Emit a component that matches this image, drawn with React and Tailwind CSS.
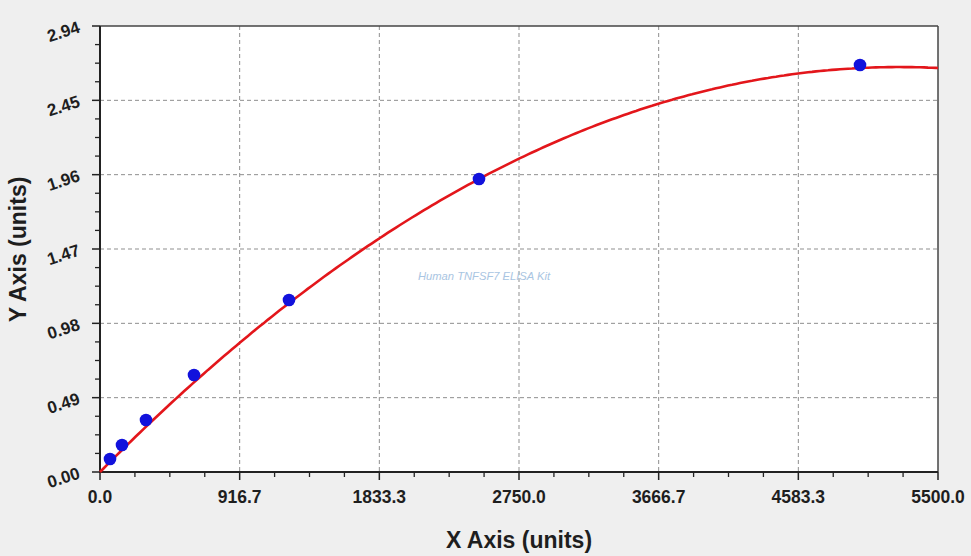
import React from "react";

// plot frame, in page pixels
const LEFT = 100;
const RIGHT = 938;
const TOP = 26;
const BOTTOM = 472;
const XSTEP = (RIGHT - LEFT) / 6;
const YSTEP = (BOTTOM - TOP) / 6;

const X_LABELS = ["0.0", "916.7", "1833.3", "2750.0", "3666.7", "4583.3", "5500.0"];
const Y_LABELS = ["0.00", "0.49", "0.98", "1.47", "1.96", "2.45", "2.94"];

const POINTS = [
  [110, 459],
  [122, 445],
  [146, 420],
  [194, 375],
  [289, 300],
  [479, 179],
  [860, 65],
];

const curveY = (t) => BOTTOM - 1.0134 * t + 0.000634 * t * t;

const curvePath = () => {
  const pts = [];
  for (let t = 0; t <= RIGHT - LEFT; t += 4) pts.push([LEFT + t, curveY(t)]);
  pts.push([RIGHT, curveY(RIGHT - LEFT)]);
  return pts.map((p, i) => `${i ? "L" : "M"}${p[0].toFixed(1)} ${p[1].toFixed(1)}`).join(" ");
};

const Chart = () => {
  const steps = [0, 1, 2, 3, 4, 5, 6];
  const minors = [1, 2, 3];

  return (
    <svg width="934" height="516" viewBox="37 0 934 516" className="block shrink-0">
      <rect x={LEFT} y={TOP} width={RIGHT - LEFT} height={BOTTOM - TOP} fill="#ffffff" />

      {/* grid */}
      {steps.slice(1, 6).map((i) => (
        <line
          key={"gx" + i}
          x1={LEFT + i * XSTEP}
          x2={LEFT + i * XSTEP}
          y1={TOP}
          y2={BOTTOM}
          stroke="#8f8f8f"
          strokeWidth="1"
          strokeDasharray="4 3"
        />
      ))}
      {steps.slice(1, 6).map((j) => (
        <line
          key={"gy" + j}
          x1={LEFT}
          x2={RIGHT}
          y1={BOTTOM - j * YSTEP}
          y2={BOTTOM - j * YSTEP}
          stroke="#8f8f8f"
          strokeWidth="1"
          strokeDasharray="4 3"
        />
      ))}

      {/* frame */}
      <line x1={LEFT} x2={RIGHT} y1={TOP} y2={TOP} stroke="#444" strokeWidth="1.5" />
      <line x1={RIGHT} x2={RIGHT} y1={TOP} y2={BOTTOM} stroke="#444" strokeWidth="1.5" />
      <line x1={LEFT} x2={LEFT} y1={TOP} y2={BOTTOM + 1} stroke="#222" strokeWidth="2" />
      <line x1={LEFT - 1} x2={RIGHT} y1={BOTTOM} y2={BOTTOM} stroke="#222" strokeWidth="2" />

      {/* ticks */}
      {steps.map((i) => (
        <g key={"tx" + i}>
          <line x1={LEFT + i * XSTEP} x2={LEFT + i * XSTEP} y1={BOTTOM} y2={BOTTOM + 8} stroke="#222" strokeWidth="1.5" />
          {i < 6 &&
            minors.map((k) => (
              <line
                key={k}
                x1={LEFT + i * XSTEP + (k * XSTEP) / 4}
                x2={LEFT + i * XSTEP + (k * XSTEP) / 4}
                y1={BOTTOM}
                y2={BOTTOM + 5}
                stroke="#222"
                strokeWidth="1.3"
              />
            ))}
        </g>
      ))}
      {steps.map((j) => (
        <g key={"ty" + j}>
          <line x1={LEFT - 8} x2={LEFT} y1={BOTTOM - j * YSTEP} y2={BOTTOM - j * YSTEP} stroke="#222" strokeWidth="1.5" />
          {j < 6 &&
            minors.map((k) => (
              <line
                key={k}
                x1={LEFT - 5}
                x2={LEFT}
                y1={BOTTOM - j * YSTEP - (k * YSTEP) / 4}
                y2={BOTTOM - j * YSTEP - (k * YSTEP) / 4}
                stroke="#222"
                strokeWidth="1.3"
              />
            ))}
        </g>
      ))}

      {/* tick labels */}
      {X_LABELS.map((label, i) => (
        <text
          key={label}
          x={LEFT + i * XSTEP}
          y={503}
          textAnchor="middle"
          fontSize="17.5"
          fontWeight="700"
          fill="#1e1e1e"
        >
          {label}
        </text>
      ))}
      {Y_LABELS.map((label, j) => {
        const y = BOTTOM - j * YSTEP + 6;
        return (
          <text
            key={label}
            x={81}
            y={y}
            textAnchor="end"
            fontSize="17"
            fontWeight="700"
            fill="#1e1e1e"
            transform={`rotate(-18 81 ${y})`}
          >
            {label}
          </text>
        );
      })}

      <text x={418} y={280} fontSize="11.2" fontStyle="italic" fill="#a9c5e2">
        Human TNFSF7 ELISA Kit
      </text>

      {/* fit + standards */}
      <path d={curvePath()} fill="none" stroke="#e3161b" strokeWidth="2.6" strokeLinejoin="round" />
      {POINTS.map(([x, y]) => (
        <circle key={x} cx={x} cy={y} r="6.3" fill="#1212dc" />
      ))}
    </svg>
  );
};

export default function App() {
  return (
    <div className="w-[971px] h-[556px] overflow-hidden bg-[#efefef] flex flex-col font-['Liberation_Sans',Arial,sans-serif] text-[#1e1e1e]">
      <div className="flex h-[516px]">
        <div className="w-[37px] shrink-0 flex items-center justify-center pb-[18px]">
          <span className="-rotate-90 whitespace-nowrap text-[23px] font-bold leading-none">Y Axis (units)</span>
        </div>
        <Chart />
      </div>
      <div className="flex justify-center pl-[67px] pt-[13px]">
        <span className="text-[23px] font-bold leading-none">X Axis (units)</span>
      </div>
    </div>
  );
}
